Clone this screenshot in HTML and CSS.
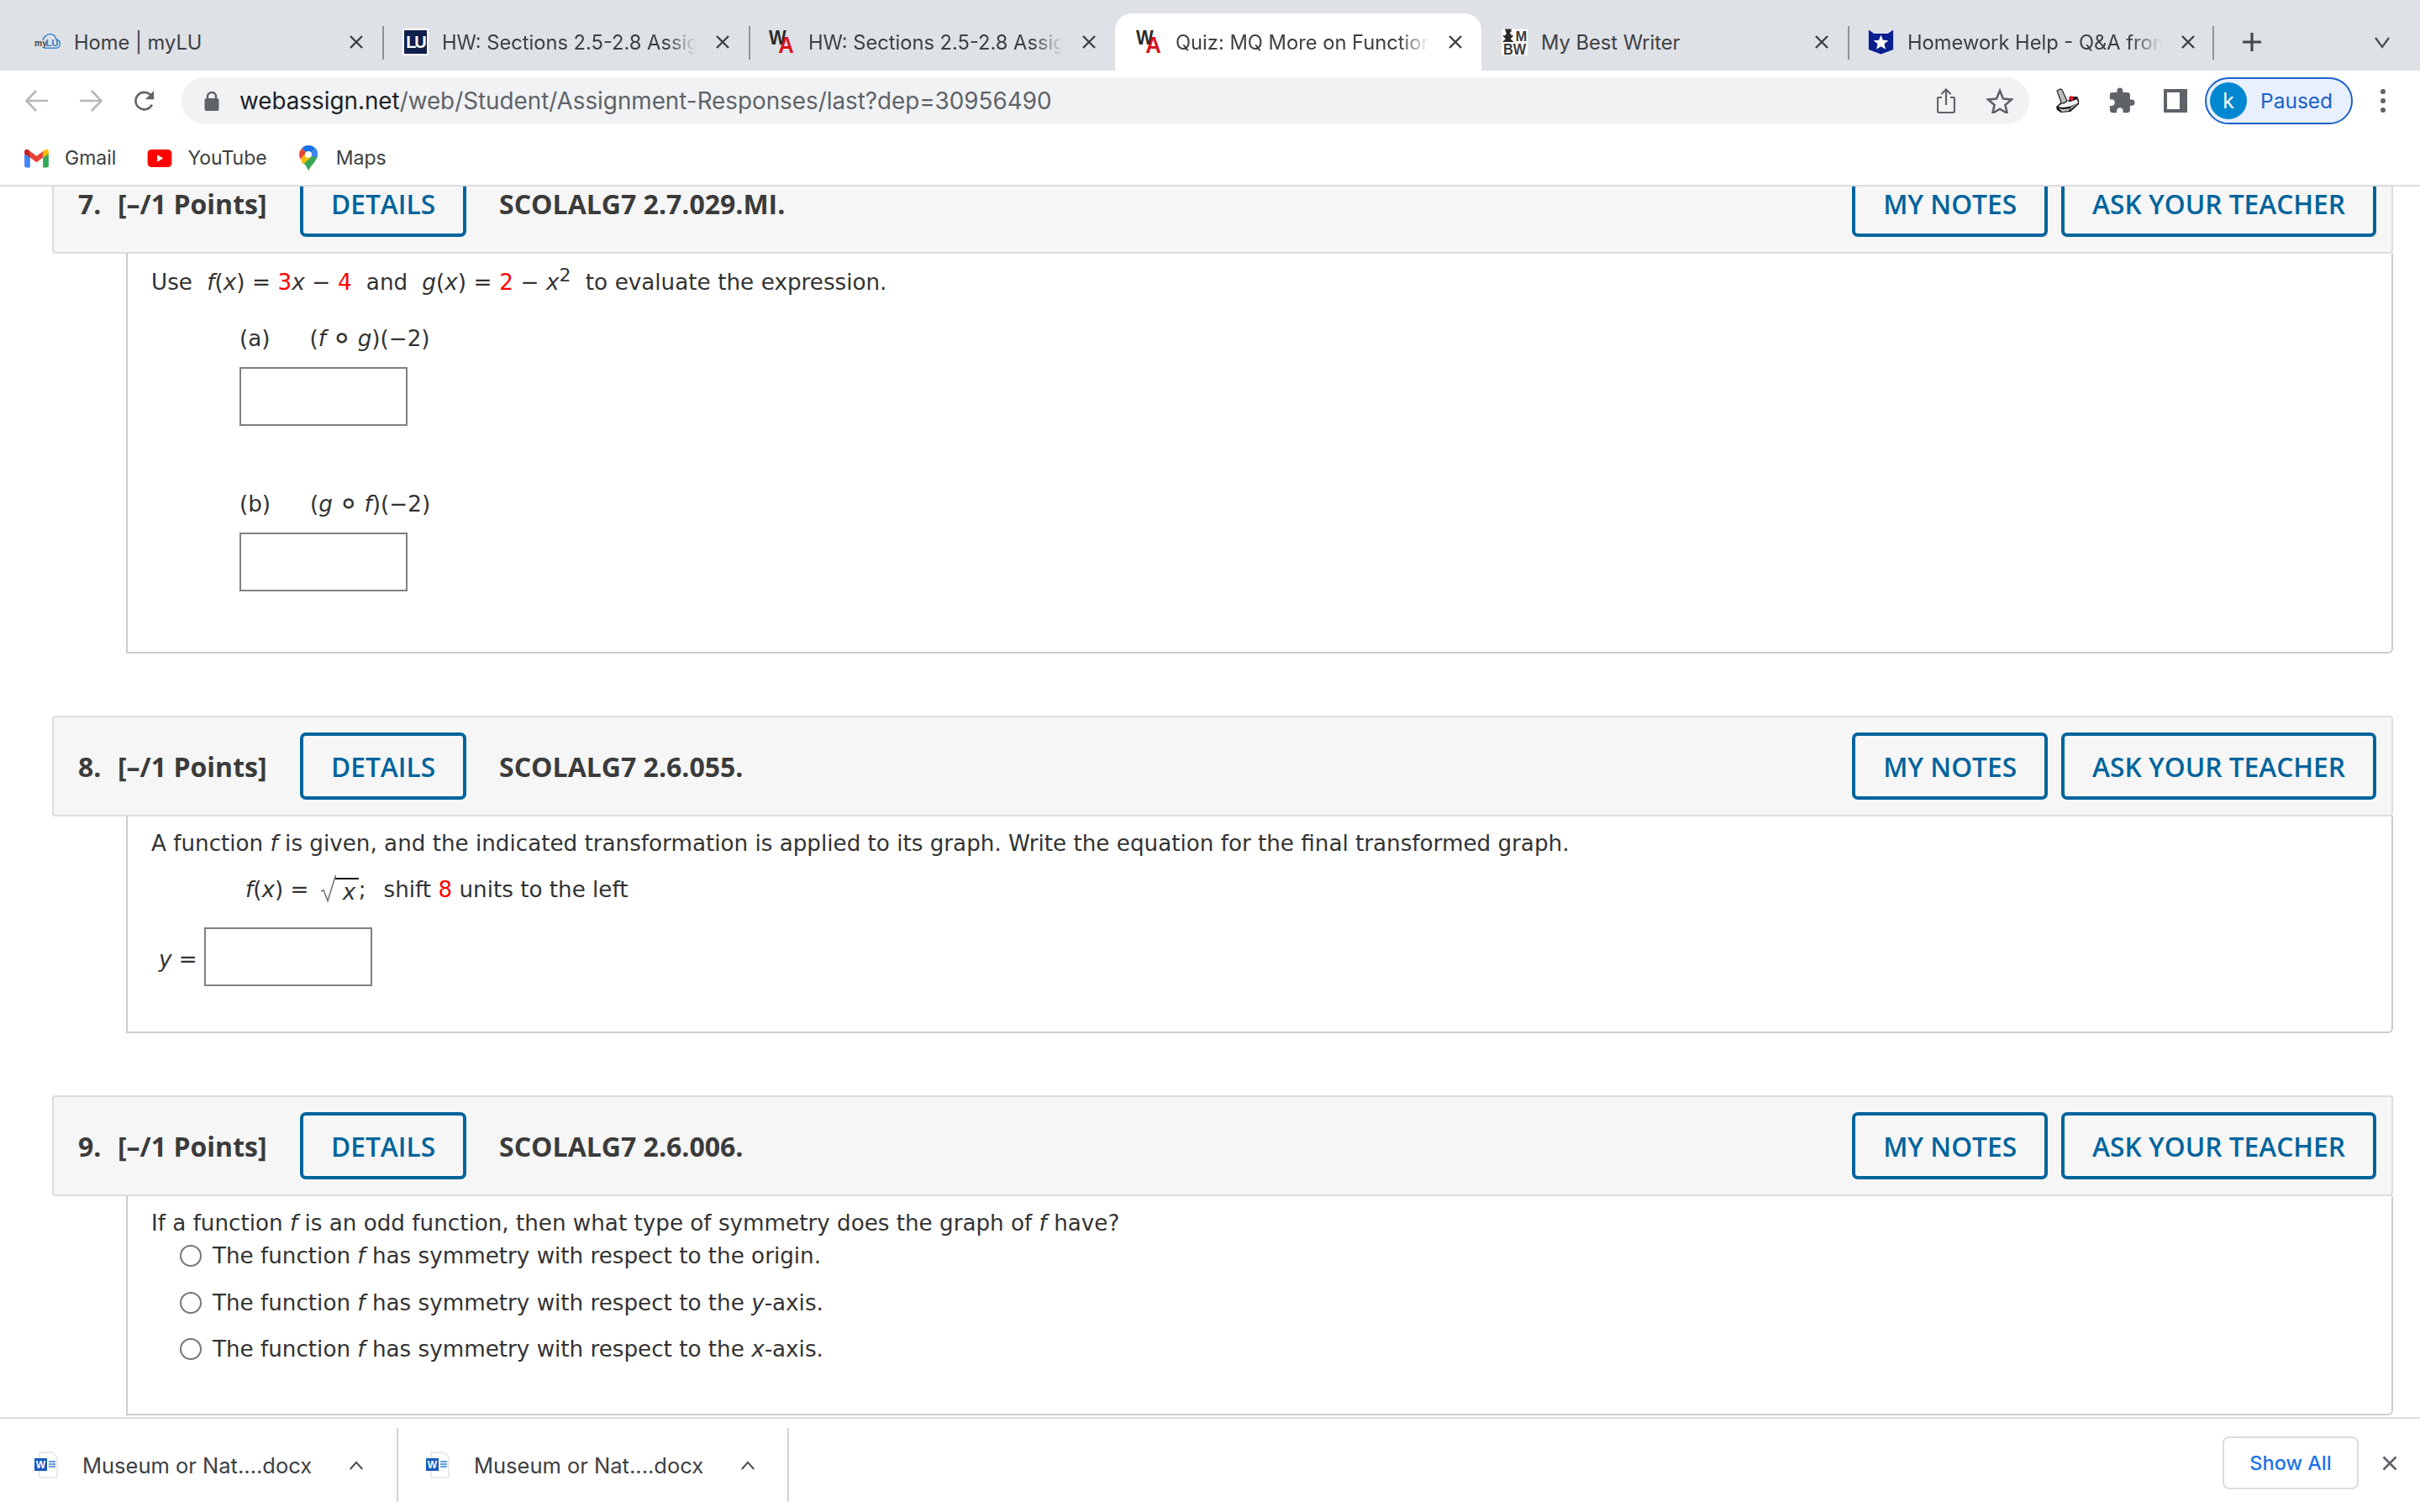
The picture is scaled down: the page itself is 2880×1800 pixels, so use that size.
FILE: index.html
```html
<!DOCTYPE html>
<html lang="en">
<head>
<meta charset="utf-8">
<title>Quiz: MQ More on Functions</title>
<link rel="stylesheet" href="styles.css">
</head>
<body>
<header class="chrome">
  <div class="tabstrip">
    <div class="tab">
      <svg class="fav" viewBox="0 0 30 30"><path d="M11 22h13a5 5 0 0 0 1-10 7 7 0 0 0-12-4 6 6 0 0 0-3 5" fill="none" stroke="#3f8fd0" stroke-width="1.600"/><text x="0" y="20" class="fav-my">my</text><text x="13" y="20" class="fav-lu">LU</text></svg>
      <span class="tab-title">Home | myLU</span><svg class="tab-x" viewBox="0 0 16 16"><path d="M1 1l14 14M15 1L1 15"/></svg>
    </div>
    <div class="tab sep">
      <div class="fav fav-lib"><span>LU</span></div>
      <span class="tab-title fade">HW: Sections 2.5-2.8 Assignment</span><svg class="tab-x" viewBox="0 0 16 16"><path d="M1 1l14 14M15 1L1 15"/></svg>
    </div>
    <div class="tab sep">
      <svg class="fav" viewBox="0 0 30 30"><text x="0" y="18" class="wa-w" textLength="20" lengthAdjust="spacingAndGlyphs">W</text><text x="11" y="28" class="wa-a" textLength="18" lengthAdjust="spacingAndGlyphs">A</text></svg>
      <span class="tab-title fade">HW: Sections 2.5-2.8 Assignment</span><svg class="tab-x" viewBox="0 0 16 16"><path d="M1 1l14 14M15 1L1 15"/></svg>
    </div>
    <div class="tab active">
      <svg class="fav" viewBox="0 0 30 30"><text x="0" y="18" class="wa-w" textLength="20" lengthAdjust="spacingAndGlyphs">W</text><text x="11" y="28" class="wa-a" textLength="18" lengthAdjust="spacingAndGlyphs">A</text></svg>
      <span class="tab-title fade">Quiz: MQ More on Functions</span><svg class="tab-x" viewBox="0 0 16 16"><path d="M1 1l14 14M15 1L1 15"/></svg>
    </div>
    <div class="tab">
      <svg class="fav" viewBox="0 0 32 32"><rect width="32" height="32" fill="#fff"/><path d="M4 0h8v3l-2 2 2 2v1h3L11 12l4 4H1l4-4L1 8h3l2-2z" fill="#2a2a2a"/><text x="17" y="14.500" class="bw-t">M</text><text x="16" y="31" class="bw-b" text-anchor="middle" textLength="28" lengthAdjust="spacingAndGlyphs">BW</text></svg>
      <span class="tab-title">My Best Writer</span><svg class="tab-x" viewBox="0 0 16 16"><path d="M1 1l14 14M15 1L1 15"/></svg>
    </div>
    <div class="tab sep end">
      <svg class="fav" viewBox="0 0 34 32"><path d="M1 0l7 5h18l7-5v26l-16 6-16-6z" fill="#0a1f8f"/><path d="M17 7l2.700 6.600 7 .5-5.400 4.500 1.800 6.900-6.100-3.800-6.100 3.800 1.800-6.900-5.400-4.500 7-.5z" fill="#fff"/></svg>
      <span class="tab-title fade">Homework Help - Q&amp;A from Online Tutors</span><svg class="tab-x" viewBox="0 0 16 16"><path d="M1 1l14 14M15 1L1 15"/></svg>
    </div>
    <svg class="newtab" viewBox="0 0 24 24"><path d="M12 1v22M1 12h22" stroke="#45494e" stroke-width="3.200" fill="none"/></svg>
    <svg class="tabmenu" viewBox="0 0 20 20"><path d="M2 5l8 11 8-11" stroke="#45494e" stroke-width="2.200" fill="none"/></svg>
  </div>
  <div class="toolbar">
    <span class="slot"><svg class="ic28" viewBox="0 0 28 26"><path d="M27 13H2M13 1L1.500 13 13 25" stroke="#b4b7bb" stroke-width="2.600" fill="none"/></svg></span>
    <span class="slot"><svg class="ic28" viewBox="0 0 28 26"><path d="M1 13h25M15 1l11.500 12L15 25" stroke="#b4b7bb" stroke-width="2.600" fill="none"/></svg></span>
    <span class="slot"><svg class="ic28" viewBox="0 0 28 28"><path d="M23.500 19a11 11 0 1 1-.7-11" stroke="#5f6368" stroke-width="2.800" fill="none"/><path d="M26 1v11H15z" fill="#5f6368"/></svg></span>
    <div class="omnibox">
      <svg class="lock" viewBox="0 0 18 24"><path d="M4 10V7a5 5 0 0 1 10 0v3" fill="none" stroke="#5f6368" stroke-width="2.400"/><rect x="0.500" y="9" width="17" height="15" rx="2" fill="#5f6368"/></svg>
      <span class="url"><b>webassign.net</b>/web/Student/Assignment-Responses/last?dep=30956490</span>
      <span class="slot"><svg class="ic-share" viewBox="0 0 22 30"><path d="M6 11H2a1 1 0 0 0-1 1v15a2 2 0 0 0 2 2h16a2 2 0 0 0 2-2V12a1 1 0 0 0-1-1h-4M11 20V2M5.500 7L11 1.500 16.500 7" stroke="#5f6368" stroke-width="2.200" fill="none"/></svg></span>
      <span class="slot"><svg class="ic-star" viewBox="0 0 32 30"><path d="M16 3l4 9.500 10 .9-7.600 6.600 2.300 9.800L16 24.700 7.300 29.800 9.600 20 2 13.400l10-.9z" stroke="#5f6368" stroke-width="2.600" fill="none"/></svg></span>
    </div>
    <span class="slot ext1"><svg class="ic-joy" viewBox="0 0 30 30"><path d="M1 22L10 14 14 16 20 10 26 10 28 14 28 19 18 28 7 29 2 26z" fill="#111"/><path d="M3 22l9-7 6 1 8-3 1 5-11 4-7 1z" fill="#f2f2f2"/><path d="M4 24l6 1 8-1-2 3-8 1z" fill="#bdbdbd"/><path d="M18 22l8-4 0 1-8 7z" fill="#8f8f8f"/><path d="M2 3l4-2 2 1 6 13-4 3-3-1z" fill="#bcbcbc" stroke="#222" stroke-width="1.200"/><circle cx="19" cy="12" r="2.800" fill="#d2162b"/></svg></span>
    <span class="slot"><svg class="ic-puz" viewBox="0 0 24 24"><path fill="#5f6368" d="M20.500 11H19V7c0-1.100-.9-2-2-2h-4V3.500C13 2.120 11.880 1 10.500 1S8 2.120 8 3.500V5H4c-1.100 0-1.990.9-1.990 2v3.800H3.500c1.490 0 2.700 1.210 2.700 2.700s-1.210 2.700-2.700 2.700H2V20c0 1.100.9 2 2 2h3.800v-1.500c0-1.490 1.210-2.700 2.700-2.700 1.490 0 2.700 1.210 2.700 2.700V22H17c1.100 0 2-.9 2-2v-4h1.500c1.380 0 2.500-1.120 2.500-2.500S21.880 11 20.500 11z"/></svg></span>
    <span class="slot"><span class="panel"></span></span>
    <div class="profile"><span class="avatar">k</span><span class="paused">Paused</span></div>
    <span class="slot menu"><i></i><i></i><i></i></span>
  </div>
  <nav class="bookmarks">
    <span class="bm bm-gmail"><svg viewBox="0 0 30 24" class="bm-m"><path d="M0 6v15a2.500 2.500 0 0 0 2.500 2.500H7V10z" fill="#4285f4"/><path d="M23 10v13.500h4.500A2.500 2.500 0 0 0 30 21V6z" fill="#34a853"/><path d="M0 3.500v3L7 11V3L5 1.500C3 0 0 1 0 3.500z" fill="#c5221f"/><path d="M7 3v8l8 6 8-6V3l-8 6z" fill="#ea4335"/><path d="M23 3v8l7-4.500v-3C30 1 27 0 25 1.500z" fill="#fbbc04"/></svg>Gmail</span>
    <span class="bm bm-yt"><svg viewBox="0 0 30 24" class="bm-y"><rect width="30" height="22" y="1" rx="5" fill="#f00"/><path d="M12 7.500v9l7.500-4.500z" fill="#fff"/></svg>YouTube</span>
    <span class="bm bm-maps"><svg viewBox="0 0 24 32" class="bm-p"><path d="M5 21l16-18c2 2 3 5 3 8 0 8-9 14-12 21-1.500-4-4-7.500-7-11z" fill="#34a853"/><path d="M3.500 3A12 12 0 0 1 21 3l-6 6H9z" fill="#1a73e8"/><path d="M0 11a12 12 0 0 1 3.500-8L9 9l-7 8a12 12 0 0 1-2-6z" fill="#ea4335"/><path d="M2 17l7-8 6 6-10 9z" fill="#fbbc04"/><path d="M15 9l6-6c2 2 3 5 3 8l-1 4-8-2z" fill="#4285f4"/><circle cx="12" cy="11" r="4.300" fill="#fff"/></svg>Maps</span>
  </nav>
</header>

<main class="viewport">
  <div class="page">
    <section class="question">
      <div class="q-head">
        <span class="q-num">7.</span><span class="q-pts">[–/1 Points]</span>
        <span class="btn btn-details">DETAILS</span><span class="q-code">SCOLALG7 2.7.029.MI.</span>
        <span class="btn btn-notes">MY NOTES</span><span class="btn">ASK YOUR TEACHER</span>
      </div>
      <div class="q-body body7">
        <p class="line math-line">Use &nbsp;<i>f</i>(<i>x</i>) = <em>3</em><i>x</i> − <em>4</em> &nbsp;and&nbsp; <i>g</i>(<i>x</i>) = <em>2</em> − <i>x</i><sup>2</sup> &nbsp;to evaluate the expression.</p>
        <div class="part"><p class="line">(a)<span class="expr">(<i>f</i> <span class="comp">∘</span> <i>g</i>)(−2)</span></p><span class="answer"></span></div>
        <div class="part part-b"><p class="line">(b)<span class="expr">(<i>g</i> <span class="comp">∘</span> <i>f</i>)(−2)</span></p><span class="answer"></span></div>
      </div>
    </section>
    <section class="question">
      <div class="q-head">
        <span class="q-num">8.</span><span class="q-pts">[–/1 Points]</span>
        <span class="btn btn-details">DETAILS</span><span class="q-code">SCOLALG7 2.6.055.</span>
        <span class="btn btn-notes">MY NOTES</span><span class="btn">ASK YOUR TEACHER</span>
      </div>
      <div class="q-body body8">
        <p class="line">A function <i>f</i> is given, and the indicated transformation is applied to its graph. Write the equation for the final transformed graph.</p>
        <p class="line formula"><i>f</i>(<i>x</i>) = <svg class="radical" viewBox="0 0 18 34"><path d="M0 20l3-1.500 5 13L17.500 1" fill="none" stroke="#777" stroke-width="1.600"/></svg><span class="radicand"><i>x</i></span>;<span class="shift">shift <em>8</em> units to the left</span></p>
        <div class="answer-row"><span class="y-label"><i>y</i> =</span><span class="answer"></span></div>
      </div>
    </section>
    <section class="question">
      <div class="q-head">
        <span class="q-num">9.</span><span class="q-pts">[–/1 Points]</span>
        <span class="btn btn-details">DETAILS</span><span class="q-code">SCOLALG7 2.6.006.</span>
        <span class="btn btn-notes">MY NOTES</span><span class="btn">ASK YOUR TEACHER</span>
      </div>
      <div class="q-body body9">
        <p class="line tight">If a function <i>f</i> is an odd function, then what type of symmetry does the graph of <i>f</i> have?</p>
        <ul class="choices">
          <li><span class="radio"></span>The function <i>f</i>&nbsp;has symmetry with respect to the origin.</li>
          <li><span class="radio"></span>The function <i>f</i>&nbsp;has symmetry with respect to the <i>y</i>-axis.</li>
          <li><span class="radio"></span>The function <i>f</i>&nbsp;has symmetry with respect to the <i>x</i>-axis.</li>
        </ul>
      </div>
    </section>
  </div>
</main>

<footer class="downloads">
  <div class="dl dl-first">
    <svg class="doc" viewBox="0 0 28 32"><path d="M6 1h15l6 6v24H6z" fill="#fff" stroke="#d5d5d5"/><path d="M17 12h8M17 15h8M17 18h8" stroke="#2b7cd3" stroke-width="1.500"/><rect y="8" width="15" height="15" fill="#185abd"/><text x="7.500" y="20" class="doc-w">W</text></svg>
    <span class="dl-name">Museum or Nat....docx</span>
    <svg class="dl-chev" viewBox="0 0 20 12"><path d="M2 11l8-9 8 9" stroke="#45494e" stroke-width="2.200" fill="none"/></svg>
  </div>
  <div class="dl">
    <svg class="doc" viewBox="0 0 28 32"><path d="M6 1h15l6 6v24H6z" fill="#fff" stroke="#d5d5d5"/><path d="M17 12h8M17 15h8M17 18h8" stroke="#2b7cd3" stroke-width="1.500"/><rect y="8" width="15" height="15" fill="#185abd"/><text x="7.500" y="20" class="doc-w">W</text></svg>
    <span class="dl-name">Museum or Nat....docx</span>
    <svg class="dl-chev" viewBox="0 0 20 12"><path d="M2 11l8-9 8 9" stroke="#45494e" stroke-width="2.200" fill="none"/></svg>
  </div>
  <span class="show-all">Show All</span>
  <svg class="dl-close" viewBox="0 0 18 18"><path d="M1.500 1.500l15 15M16.500 1.500l-15 15" stroke="#5f6368" stroke-width="2.600" fill="none"/></svg>
</footer>
</body>
</html>
```

FILE: styles.css
```css
* { box-sizing: border-box; }
html, body { margin: 0; padding: 0; height: 100%; }
body {
  width: 2880px; height: 1800px; overflow: hidden;
  display: flex; flex-direction: column;
  background: #fff;
  font-family: Inter, Roboto, "Liberation Sans", sans-serif;
}

/* browser chrome */
.chrome { flex: none; height: 222px; border-bottom: 2px solid #dadce0; background: #fff; }
.tabstrip {
  height: 84px; background: #dee1e6; padding-left: 19px;
  display: flex; align-items: flex-end;
}
.tab {
  width: 436px; height: 68px; flex: none; position: relative;
  display: flex; align-items: center; padding-left: 24px;
  font-size: 23.700px; color: #3c4043;
}
.tab:first-child { padding-left: 22px; }
.tab.sep::before, .tab.end::after {
  content: ""; position: absolute; left: 0; top: 15px; height: 40px; width: 2px; background: #8e9297;
}
.tab.end::after { left: auto; right: 0; }
.tab.active { background: #fff; border-radius: 20px 20px 0 0; padding-left: 25px; }
.fav { width: 31px; height: 32px; flex: none; margin-right: 16px; }
.tab-title { flex: 1; min-width: 0; overflow: hidden; white-space: nowrap; }
.tab-title.fade { -webkit-mask-image: linear-gradient(90deg, #000 88%, transparent 100%); mask-image: linear-gradient(90deg, #000 88%, transparent 100%); }
.tab-x { flex: none; width: 16px; height: 16px; margin: 0 23px; stroke: #3c4043; stroke-width: 2.400; fill: none; }
.fav-my { font: 700 10px "Liberation Sans", sans-serif; fill: #444; }
.fav-lu { font: 700 11px "Liberation Sans", sans-serif; fill: #2f7fc0; }
.fav-lib { background: #11204a; border: 2px solid #fff; color: #fff; display: flex; align-items: center; justify-content: center; font: 700 20px "Liberation Sans", sans-serif; letter-spacing: -2px; }
.wa-w { font: 700 24px "Liberation Sans", sans-serif; fill: #2a2a2a; }
.wa-a { font: 700 26px "Liberation Sans", sans-serif; fill: #d8121c; }
.bw-t { font: 700 17px "Liberation Sans", sans-serif; fill: #3a3a3a; }
.bw-b { font: 700 18px "Liberation Sans", sans-serif; fill: #3a3a3a; }
.newtab { width: 24px; height: 24px; flex: none; margin-left: 33px; margin-bottom: 22px; }
.tabmenu { width: 20px; height: 20px; flex: none; margin-left: 133px; margin-bottom: 24px; }

.toolbar { height: 64px; display: flex; align-items: center; padding-left: 12px; padding-top: 8px; }
.slot { width: 64px; height: 56px; flex: none; display: flex; align-items: center; justify-content: center; }
.ic28 { width: 28px; height: 26px; }
.omnibox {
  flex: none; width: 2199px; height: 56px; margin-left: 12px; margin-right: 14px;
  background: #f0f2f4; border-radius: 28px;
  display: flex; align-items: center; padding: 0 3px 0 27px;
}
.lock { width: 18px; height: 24px; flex: none; margin-right: 24px; }
.url { flex: 1; font-size: 27.800px; color: #5f6368; white-space: nowrap; }
.url b { font-weight: 400; color: #202124; }
.ic-share { width: 22px; height: 30px; }
.ic-star { width: 32px; height: 30px; }
.ic-joy { width: 30px; height: 30px; }
.ic-puz { width: 34px; height: 34px; }
.panel { width: 28px; height: 28px; border: 4px solid #5f6368; border-right-width: 9px; }
.profile {
  flex: none; width: 176px; height: 56px; margin-left: 3px;
  border: 2px solid #1a62c8; border-radius: 28px; background: #e8f0fe;
  display: flex; align-items: center; padding-left: 4px;
}
.avatar { width: 44px; height: 44px; border-radius: 50%; background: #0288d1; color: #fff; font-size: 25px; display: flex; align-items: center; justify-content: center; }
.paused { margin-left: 16px; font-size: 24.500px; color: #1a62c8; }
.menu { flex-direction: column; gap: 5px; width: 52px; margin-left: 10px; }
.menu i { width: 6px; height: 6px; border-radius: 50%; background: #5f6368; }

.bookmarks { height: 72px; display: flex; align-items: center; padding-left: 29px; font-size: 23px; color: #3c4043; padding-top: 8px; }
.bm { display: flex; align-items: center; }
.bm-m { width: 29px; height: 23px; margin-right: 19px; }
.bm-y { width: 30px; height: 23px; margin-right: 18px; }
.bm-p { width: 22px; height: 31px; margin-right: 22px; }
.bm-yt { margin-left: 37px; }
.bm-maps { margin-left: 38px; }

/* page */
.viewport { flex: 1; min-height: 0; overflow: hidden; }
.page { margin-top: -40px; padding: 0 32px 0 62px; font-family: "DejaVu Sans", sans-serif; font-size: 26.200px; color: #333; }
.question + .question { margin-top: 74px; }
.q-head {
  height: 120px; display: flex; align-items: center; padding: 0 18px 0 29px;
  background: #f6f6f6; border: 2px solid #ddd; border-radius: 4px;
  font-family: "Open Sans", sans-serif; font-weight: 700; font-size: 32px; color: #3b3b3b;
}
.q-num { width: 47px; }
.q-pts { width: 217px; }
.btn {
  height: 80px; padding: 0 33px; display: flex; align-items: center; width: auto;
  border: 4px solid #00649c; border-radius: 7px; color: #00649c; background: transparent;
  font-weight: 600; font-size: 31.700px;
}
.q-code { margin-left: 39px; margin-right: auto; }
.btn-notes { margin-right: 16px; }
.q-body { margin-left: 88px; border: 2px solid #ccc; border-top: 0; border-radius: 0 0 6px 0; padding-left: 28px; }
.line { margin: 0; line-height: 40px; white-space: nowrap; }
.line em { font-style: normal; color: #f00; }
.line sup { font-size: 22px; line-height: 0; }
.math-line { word-spacing: .3px; }
.comp { font-size: 40px; line-height: 0; vertical-align: -3px; margin: 0 -2px; }
.body7 { padding-top: 14px; padding-bottom: 72px; }
.part { margin-top: 27px; margin-left: 105px; }
.part-b { margin-top: 73px; }
.expr { margin-left: 47px; }
.answer { display: block; width: 200px; height: 70px; border: 2px solid #808080; background: #fff; margin-top: 14px; }
.body8 { padding-top: 12px; padding-bottom: 54px; }
.formula { margin-top: 15px; margin-left: 112px; }
.radical { width: 18px; height: 34px; vertical-align: middle; margin: -6px 0 0 6px; }
.radicand { display: inline-block; border-top: 2px solid #111; line-height: 30px; margin-left: -1px; min-width: 28px; text-indent: 9px; vertical-align: -3px; }
.shift { margin-left: 21px; }
.answer-row { display: flex; align-items: center; margin-top: 25px; margin-left: 9px; }
.answer-row .answer { margin-top: 0; }
.y-label { width: 54px; padding-top: 6px; }
.body9 { padding-top: 14px; padding-bottom: 59px; }
.tight { line-height: 36px; }
.choices { list-style: none; margin: 3px 0 0 34px; padding: 0; display: flex; flex-direction: column; gap: 19.500px; }
.choices li { height: 36px; display: flex; align-items: center; white-space: pre; }
.radio { width: 26px; height: 26px; border-radius: 50%; border: 2px solid #767676; background: #fff; margin-right: 13px; flex: none; }

/* downloads bar */
.downloads {
  flex: none; height: 113px; border-top: 2px solid #dadce0; background: #fff;
  display: flex; align-items: flex-start; padding-top: 11px; color: #3c4043; font-size: 25.500px;
}
.dl { width: 465px; height: 88px; border-right: 2px solid #d0d2d5; display: flex; align-items: center; padding-left: 33px; flex: none; }
.dl-first { width: 474px; padding-left: 41px; }
.doc { width: 28px; height: 32px; flex: none; margin-right: 29px; }
.doc-w { font: 700 12px "Liberation Sans", sans-serif; fill: #fff; text-anchor: middle; }
.dl-name { width: 277px; flex: none; white-space: nowrap; }
.dl-chev { width: 18px; height: 11px; flex: none; margin-left: 40px; }
.show-all {
  margin-left: auto; margin-top: 10px; width: 162px; height: 63px; border: 2px solid #dadce0; border-radius: 8px;
  display: flex; align-items: center; justify-content: center; color: #1a73e8; font-size: 23.500px; font-weight: 500;
}
.dl-close { width: 18px; height: 18px; flex: none; margin: 33px 27px 0 28px; }
```
